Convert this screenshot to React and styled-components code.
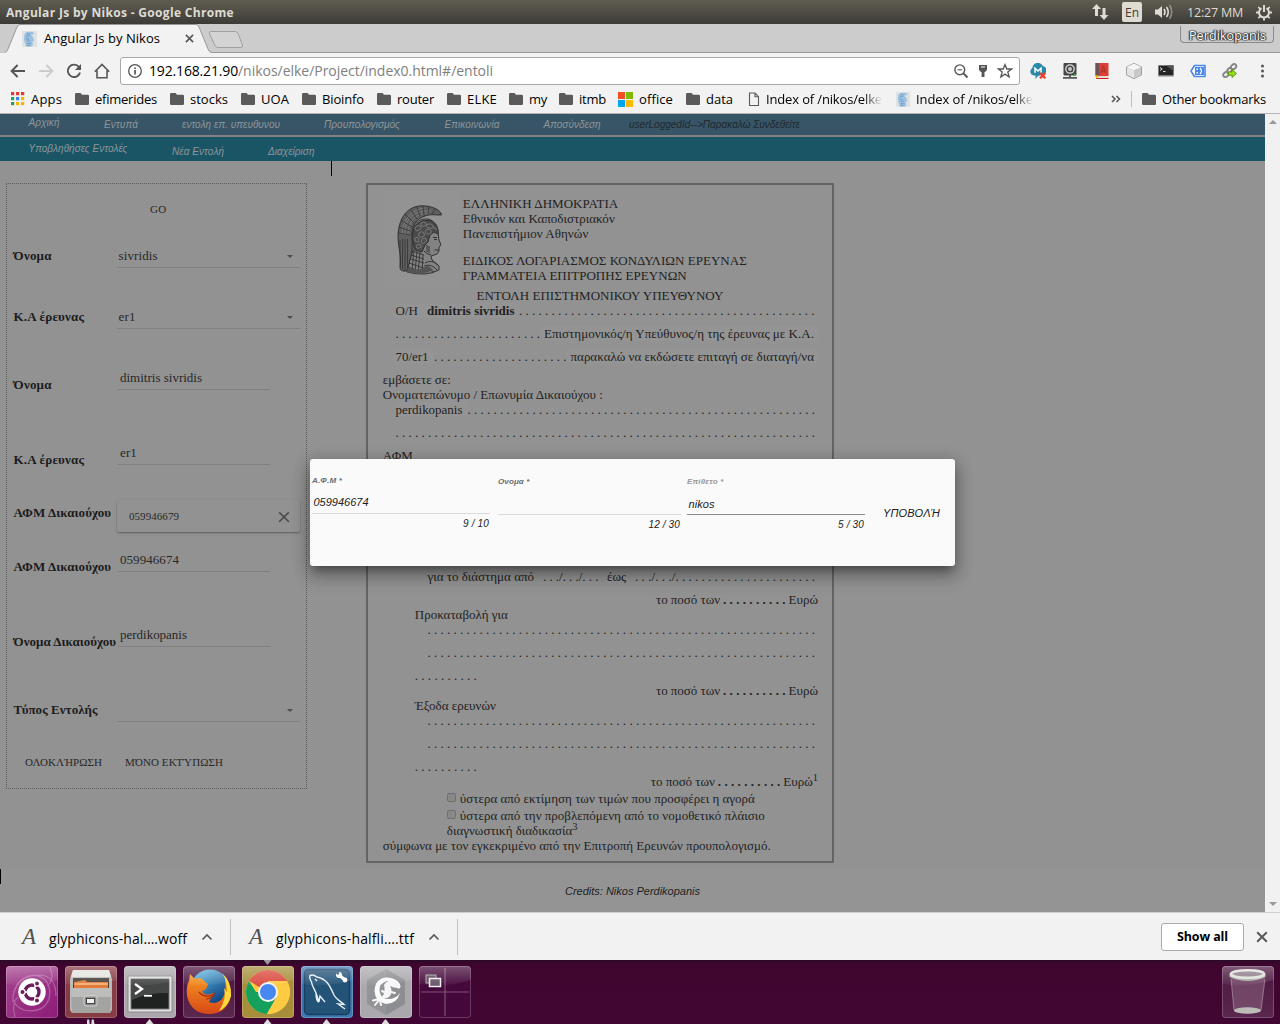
import React, { useLayoutEffect, useRef } from 'react';
import styled, { createGlobalStyle, css } from 'styled-components';

const UI = '"Open Sans", "Noto Sans", sans-serif';
const SERIF = '"Liberation Serif", serif';
const SANS = '"Liberation Sans", sans-serif';

const Global = createGlobalStyle`
  *, *::before, *::after { box-sizing: border-box; }
  html, body { margin: 0; padding: 0; background: #929292; }
  svg { display: block; flex: none; }
`;

/* ---------- text that is tracked to an exact measure ---------- */
const FitBox = styled.span`
  display: block;
  flex: none;
  width: ${(p) => p.$w}px;
  white-space: pre;
  ${(p) => p.$fade && css`
    overflow: hidden;
    mask-image: linear-gradient(90deg, #000 84%, transparent);
  `}
`;
function Fit({ w, fade, children, className }) {
  const ref = useRef(null);
  useLayoutEffect(() => {
    const el = ref.current;
    el.style.letterSpacing = '0px';
    const natural = el.getBoundingClientRect().width;
    const n = Math.max(1, el.textContent.length);
    el.style.letterSpacing = `${(w - natural) / n}px`;
  }, [w, children]);
  return (
    <FitBox $w={w} $fade={fade} className={className}><span ref={ref}>{children}</span></FitBox>
  );
}

/* ---------- desktop ---------- */
const Desktop = styled.div`
  width: 1280px;
  height: 1024px;
  overflow: hidden;
  display: flex;
  flex-direction: column;
  font-family: ${UI};
  color: #000;
`;
const Panel = styled.header`
  height: 24px;
  flex: none;
  display: flex;
  align-items: center;
  padding: 0 8px 0 6px;
  background: linear-gradient(#5f5d52, #55534a 30%, #3c3b37);
  color: #dfdbd2;
  font-size: 12.5px;
  line-height: 24px;
`;
const PanelTitle = styled(Fit)`
  margin-top: 1px;
  font-weight: 700;
  font-size: 12px;
`;
const Indicators = styled.div`
  margin-left: auto;
  display: flex;
  align-items: center;
`;
const Lang = styled.div`
  width: 20px;
  height: 20px;
  margin: 0 12px 0 13px;
  border-radius: 2px;
  background: #dfdbd2;
  color: #3c3b37;
  font-size: 12px;
  line-height: 21px;
  padding-left: 3px;
`;
const Clock = styled(Fit)`
  margin: 1px 13px 0 13px;
  font-size: 12.5px;
`;

/* ---------- browser chrome ---------- */
const TabStrip = styled.div`
  height: 29px;
  flex: none;
  display: flex;
  background: #ccc;
  border-bottom: 1px solid #999;
`;
const Tab = styled.div`
  position: relative;
  width: 213px;
  height: 29px;
  display: flex;
  align-items: center;
  padding: 0 0 0 22px;
  font-size: 13px;
  > svg:first-child { position: absolute; left: 0; top: 0; }
  > * { position: relative; }
`;
const TabTitle = styled(Fit)`margin: -1px 25px 0 7px;`;
const NewTab = styled.div`margin: 7px 0 0 -5px;`;
const UserTag = styled.div`
  margin: 2px 6px 0 auto;
  width: 94px;
  height: 17px;
  border: 1px solid #8a8a8a;
  border-top: 0;
  border-radius: 0 0 4px 4px;
  padding-left: 8px;
  color: #fff;
  font-size: 12.5px;
  line-height: 19px;
  text-shadow: 0 0 1px #222, 0 0 1px #222, 0 0 2px #333, 1px 0 1px #333, -1px 0 1px #333;
`;
const Toolbar = styled.div`
  height: 33px;
  flex: none;
  display: flex;
  align-items: center;
  padding: 3px 0 0 10px;
  background: #f2f2f2;
`;
const NavButtons = styled.div`
  display: flex;
  gap: 12px;
  width: 110px;
`;
const Omnibox = styled.div`
  width: 900px;
  height: 28px;
  display: flex;
  align-items: center;
  border: 1px solid #a8a8a8;
  border-radius: 3px;
  background: #fff;
  padding: 0 6px;
  font-size: 14px;
`;
const Host = styled(Fit)`margin: -2px 0 0 6px;`;
const Path = styled(Fit)`
  margin-top: -2px;
  color: #808080;
`;
const OmniTools = styled.div`
  margin-left: auto;
  display: flex;
  align-items: center;
  gap: 6px;
`;
const Extensions = styled.div`
  display: flex;
  gap: 16px;
  margin-left: 10px;
`;
const Bookmarks = styled.div`
  height: 28px;
  flex: none;
  display: flex;
  align-items: center;
  padding: 0 14px 1px 11px;
  background: #f2f2f2;
  border-bottom: 1px solid #b6b4b6;
  font-size: 13px;
  line-height: 24px;
`;
const Bookmark = styled.div`
  display: flex;
  align-items: center;
  gap: ${(p) => p.$gap ?? 6}px;
  margin-right: ${(p) => p.$mr ?? 13}px;
`;
const More = styled.div`
  display: flex;
  align-items: center;
  margin-left: auto;
  gap: 10px;
`;
const Rule = styled.div`
  width: 1px;
  height: ${(p) => p.$h}px;
  background: #bdbdbd;
`;

/* ---------- page ---------- */
const Viewport = styled.div`
  position: relative;
  height: 798px;
  flex: none;
  display: flex;
  background: #929292;
`;
const Page = styled.div`
  width: 1265px;
  display: flex;
  flex-direction: column;
`;
const Scrollbar = styled.div`
  width: 15px;
  background: #f1f1f1;
  display: flex;
  flex-direction: column;
  justify-content: space-between;
  align-items: center;
  padding: 6px 0 6px;
`;
const Menu = styled.nav`
  height: ${(p) => p.$h}px;
  flex: none;
  display: flex;
  background: ${(p) => p.$bg};
  border-bottom: ${(p) => p.$line || 0}px solid #828282;
  padding-left: 28.5px;
  color: #8e969a;
  font: italic 10px/12px ${SANS};
`;
const MenuItem = styled(Fit)`
  margin: ${(p) => p.$top}px ${(p) => p.$mr}px 0 0;
  color: ${(p) => p.$color || 'inherit'};
`;
const CaretRow = styled.div`
  height: 22px;
  flex: none;
  padding-left: ${(p) => p.$x}px;
`;
const TextCaret = styled.div`
  width: 1px;
  height: 15px;
  background: #000;
`;
const Main = styled.main`
  display: flex;
  align-items: flex-start;
  height: 686px;
  flex: none;
  padding-left: 6px;
`;
const Footer = styled.footer`
  flex: 1;
  display: flex;
  background: #949494;
  color: #222;
  font: italic 11px/13px ${SANS};
`;
const Credits = styled(Fit)`margin: 16px 0 0 564px;`;

/* form */
const Form = styled.form`
  width: 301px;
  height: 606px;
  border: 1px dotted #5c5c5c;
  display: flex;
  flex-direction: column;
  color: #282828;
  font: 13px/15px ${SERIF};
`;
const Row = styled.div`
  height: ${(p) => p.$h}px;
  flex: none;
  display: flex;
  padding-left: 6px;
`;
const Label = styled.label`
  width: 103px;
  flex: none;
  padding: ${(p) => p.$top}px 0 0 0.6px;
  color: #1c1c1c;
  font-weight: 700;
`;
const Select = styled.div`
  width: 183px;
  height: 20px;
  margin: 14px 0 0 0.6px;
  padding: 0 7px 0 2px;
  display: flex;
  justify-content: space-between;
  border-bottom: 1px solid #808080;
`;
const Input = styled.div`
  width: 152px;
  height: 20px;
  margin: 14px 0 0 2px;
  padding-left: 2px;
  border-bottom: 1px solid #808080;
`;
const Chip = styled.div`
  width: 183px;
  height: 32px;
  margin: 1px 0 0 1px;
  padding: 1px 10px 0 12px;
  display: flex;
  align-items: center;
  justify-content: space-between;
  border-radius: 2px;
  background: #929292;
  box-shadow: 0 1px 3px rgba(0, 0, 0, 0.22), 0 1px 1px rgba(0, 0, 0, 0.18);
  font-size: 11px;
`;
const FormButtons = styled.div`
  display: flex;
  gap: 23px;
  padding: ${(p) => p.$top}px 0 0 ${(p) => p.$x}px;
  height: ${(p) => p.$h}px;
  font-size: 11px;
`;

/* document */
const Paper = styled.article`
  width: 468px;
  height: 680px;
  margin-left: 59px;
  border: 2px solid #646464;
  padding: 6px 14px 0 14.8px;
  color: #222;
  font: 13px/15px ${SERIF};
`;
const Head = styled.div`
  display: flex;
  height: 97px;
`;
const Crest = styled.div`
  width: 76px;
  height: 98px;
  background: #939393;
  padding: 14px 0 0 13px;
`;
const HeadText = styled.div`padding: 5px 0 0 4px;`;
const HeadGroup = styled.div`margin-bottom: 12px;`;
const Line = styled.div`
  height: ${(p) => p.$h || 15}px;
  padding-left: ${(p) => p.$x || 0}px;
  display: flex;
  align-items: flex-start;
`;
const Patch = styled.span`
  display: flex;
  flex: none;
  height: 15px;
  background: #949494;
  padding: 0 ${(p) => p.$pr || 0}px 0 ${(p) => p.$pl || 0}px;
  gap: ${(p) => p.$gap || 0}px;
`;
const Amount = styled.div`
  height: 15px;
  display: flex;
  justify-content: flex-end;
  gap: 3px;
`;
const BoldDots = styled(Fit)`font-weight: 700;`;
const Euro = styled.span`display: flex;`;
const Sup = styled.span`
  height: 9px;
  margin-top: -1px;
  font-size: 10.5px;
  line-height: 9px;
`;
const Check = styled.span`
  width: 9px;
  height: 9px;
  margin: 2px 4px 0 0;
  border: 1px solid #6f6f6f;
  border-radius: 2px;
  background: #888;
`;

/* dialog */
const Dialog = styled.div`
  position: absolute;
  left: 310px;
  top: 345px;
  width: 645px;
  height: 107px;
  display: flex;
  align-items: flex-start;
  padding-left: 2px;
  border-radius: 3px;
  background: #fafafa;
  color: #212121;
  font: italic 11px/13px ${SANS};
  box-shadow: 0 7px 8px -4px rgba(0, 0, 0, 0.3), 0 10px 18px 2px rgba(0, 0, 0, 0.2), 0 4px 16px 3px rgba(0, 0, 0, 0.16);
`;
const DialogField = styled.div`
  width: ${(p) => p.$w}px;
  margin: ${(p) => p.$top}px ${(p) => p.$mr}px 0 0;
`;
const DialogLabel = styled.div`
  color: ${(p) => (p.$light ? '#999' : '#6c6c6c')};
  font-weight: 700;
  font-size: 8px;
  line-height: 10px;
  height: 19px;
`;
const DialogInput = styled.div`
  height: 19px;
  padding: ${(p) => p.$pt}px 0 0 1.5px;
  border-bottom: 1px solid ${(p) => (p.$active ? '#8c8c8c' : '#dadada')};
`;
const Counter = styled.div`
  display: flex;
  justify-content: flex-end;
  padding: 4px 1px 0 0;
  font-size: 10px;
  line-height: 12px;
`;
const Submit = styled(Fit)`margin: 48px 0 0 18px;`;

/* downloads + launcher */
const Shelf = styled.div`
  height: 48px;
  flex: none;
  display: flex;
  align-items: center;
  padding: 1px 12px 0 0;
  border-top: 1px solid #cfcfcf;
  background: #f2f2f2;
  font-size: 14px;
`;
const Download = styled.div`
  width: ${(p) => p.$w}px;
  height: 36px;
  display: flex;
  align-items: center;
  border-right: 1px solid #c0c0c0;
  padding-left: ${(p) => p.$pl}px;
`;
const FontGlyph = styled.span`
  width: 27px;
  margin: -1px 0 0 1px;
  font: italic 23px/24px ${SERIF};
  color: #505050;
`;
const FileName = styled(Fit)`margin: 2px 14px 0 0;`;
const ShowAll = styled.button`
  width: 83px;
  height: 28px;
  margin: 0 12px 0 auto;
  padding: 0 0 0 15px;
  border: 1px solid #aaa;
  border-radius: 3px;
  background: #fff;
  color: #000;
  font: 700 12.5px/24px ${UI};
  text-align: left;
`;
const Launcher = styled.div`
  height: 64px;
  flex: none;
  display: flex;
  gap: 7px;
  padding: 6px 6px 0;
  background: linear-gradient(#2b0a26, #40052f 5px, #420634);
`;
const Tile = styled.div`
  position: relative;
  width: 52px;
  height: 52px;
  flex: none;
  border-radius: 4px;
  background: ${(p) => p.$bg};
  box-shadow: inset 0 0 0 1px rgba(255, 255, 255, 0.2);
  margin-left: ${(p) => (p.$end ? 'auto' : 0)};
`;
const Pip = styled.div`
  position: absolute;
  left: 21.5px;
  ${(p) => (p.$top ? 'top: -6px;' : 'top: 53px;')}
  width: 8px;
  height: 5px;
  background: ${(p) => (p.$top ? '#999' : '#ddd')};
  clip-path: ${(p) => p.$top
    ? 'polygon(0 0, 100% 0, 50% 100%)'
    : p.$double
      ? 'polygon(0 100%, 10% 10%, 35% 10%, 40% 100%, 60% 100%, 65% 10%, 90% 10%, 100% 100%)'
      : 'polygon(50% 0, 100% 100%, 0 100%)'};
`;

/* ---------- icons ---------- */
const Folder = () => (
  <svg width="14" height="12" viewBox="0 0 14 12"><path fill="#5a5a5a" d="M0 1.2Q0 0 1.2 0H5.6L7 1.7H12.8Q14 1.7 14 3V10.8Q14 12 12.8 12H1.2Q0 12 0 10.8Z" /></svg>
);
const Favicon = ({ s = 15 }) => (
  <svg width={s} height={s + 1} viewBox="0 0 15 16">
    <rect width="15" height="16" fill="#dfe1e3" />
    <path d="M3 2Q6 0 11 1L12 3L9 4L11 6L12 10L10 11L11 13L10 15.500H4L3 12Q1 8 3 2Z" fill="#9cc0e0" />
    <path d="M5 2.500L8 3.500M4 5H7.500M4 7.500L7 8.500M5 10H8M5 12.500H9M5 14.500H8" stroke="#6a9ecb" strokeWidth="1" />
  </svg>
);
const AppsGrid = () => (
  <svg width="14" height="14" viewBox="0 0 14 14">
    {['#e33b2e', '#e33b2e', '#e33b2e', '#2aa24f', '#3b84ee', '#f7b500', '#2aa24f', '#f7b500', '#f7b500'].map((c, i) => (
      <rect key={i} x={(i % 3) * 5} y={Math.floor(i / 3) * 5} width="3.2" height="3.2" fill={c} />
    ))}
  </svg>
);
const Windows = () => (
  <svg width="15" height="15" viewBox="0 0 15 15">
    <path fill="#f25022" d="M0 0h7v7H0z" /><path fill="#7fba00" d="M8 0h7v7H8z" />
    <path fill="#00a4ef" d="M0 8h7v7H0z" /><path fill="#ffb900" d="M8 8h7v7H8z" />
  </svg>
);
const PageIcon = () => (
  <svg width="12" height="15" viewBox="0 0 12 15" fill="none" stroke="#5a5a5a" strokeWidth="1.1"><path d="M1.5 1H7L10.5 4.6V13.5H1.5ZM7 1V4.8H10.5" /></svg>
);
const Cross = ({ s, c, w = 1.6 }) => (
  <svg width={s} height={s} viewBox="0 0 10 10"><path d="M1 1L9 9M9 1L1 9" stroke={c} strokeWidth={w} /></svg>
);
const Back = ({ c, flip }) => (
  <svg width="16" height="16" viewBox="0 0 16 16" fill="none" stroke={c} strokeWidth="1.9">
    <path d={flip ? 'M1 8H14M8.4 2L14.4 8L8.4 14' : 'M15 8H2M7.6 2L1.6 8L7.6 14'} />
  </svg>
);
const Reload = () => (
  <svg width="16" height="16" viewBox="0 0 16 16"><path d="M13 4.1A6.2 6.2 0 1 0 14 9.5" fill="none" stroke="#555" strokeWidth="1.9" /><path d="M15 1V7H9Z" fill="#555" /></svg>
);
const Home = () => (
  <svg width="16" height="16" viewBox="0 0 16 16" fill="none" stroke="#555" strokeWidth="1.6"><path d="M.8 8.8L8 1.400L15.200 8.800M3 7.500V14.800H13V7.500" /></svg>
);
const Info = () => (
  <svg width="16" height="16" viewBox="0 0 16 16"><circle cx="8" cy="8" r="6.3" fill="none" stroke="#555" strokeWidth="1.3" /><path d="M7.2 7h1.7v4.6H7.2zM7.2 4.4h1.7V6H7.2z" fill="#555" /></svg>
);
const ZoomOut = () => (
  <svg width="16" height="16" viewBox="0 0 16 16" fill="none" stroke="#555" strokeWidth="1.4"><circle cx="6.8" cy="6.8" r="4.9" /><path d="M10.4 10.4L14.5 14.5" strokeWidth="2" /><path d="M4.5 6.8H9.1" strokeWidth="1.1" /></svg>
);
const KeyIcon = () => (
  <svg width="16" height="16" viewBox="0 0 16 16"><path fillRule="evenodd" fill="#555" d="M4 2H12V7L10 9H9.5V14H6.6V9H6L4 7ZM6 3.4V4.6H10V3.4Z" /></svg>
);
const Star = () => (
  <svg width="16" height="16" viewBox="0 0 16 16" fill="none" stroke="#555" strokeWidth="1.3"><path d="M8 1.6L9.8 6H14.6L10.8 9L12.2 14L8 11.1L3.8 14L5.2 9L1.4 6H6.2Z" /></svg>
);
const Dots3 = () => (
  <svg width="16" height="16" viewBox="0 0 16 16" fill="#555"><circle cx="8.5" cy="3" r="1.5" /><circle cx="8.5" cy="8" r="1.5" /><circle cx="8.5" cy="13" r="1.5" /></svg>
);
const Ext = ({ kind }) => (
  <svg width="16" height="16" viewBox="0 0 16 16">
    {kind === 'mega' && (<>
      <path d="M4 12.500A4 4 0 0 1 2.400 5A5.500 5.500 0 0 1 12.800 3A4.400 4.400 0 0 1 14.500 11L8 13L5.500 16V12.500Z" fill="#2889a8" />
      <path d="M5 9.800V5.200L8 8L11 5.200V9.800" fill="none" stroke="#fff" strokeWidth="1.500" />
      <path d="M10 10L15.300 15.300M15.300 10L10 15.300" stroke="#f04030" strokeWidth="2.300" />
    </>)}
    {kind === 'cam' && (<>
      <rect x="1.5" y="0" width="13" height="12.5" rx="1" fill="#474747" /><path d="M1 14.8H15M8 12V15" stroke="#555" strokeWidth="1.8" />
      <circle cx="8" cy="6" r="4.2" fill="none" stroke="#ddd" strokeWidth="1.3" /><circle cx="8" cy="6" r="1.9" fill="#ccc" /><rect x="12" y="11" width="2" height="2" fill="#3a3" />
    </>)}
    {kind === 'book' && (<>
      <path d="M1.5 0H14.5V13H1.5Z" fill="#dd3f35" /><path d="M1.500 0H5V13H1.500Z" fill="#6b5358" />
      <path d="M1.5 13H14.5V16H2.5Z" fill="#e9ddd8" /><path d="M2 15.5H14.5" stroke="#c22" />
      <path d="M6.5 10L9.3 3.5L12 10M7.4 8H11.2" stroke="#a83a30" strokeWidth="1.3" fill="none" /><path d="M1 12L3 16L4.500 12.500Z" fill="#f5b400" />
    </>)}
    {kind === 'cube' && (<>
      <path d="M8 .4L15.5 4V12L8 15.7L.5 12V4Z" fill="#e4e4e4" stroke="#999" strokeWidth=".9" /><path d="M8 7L15 4V12L8 15.2Z" fill="#c9c9c9" /><path d="M8 .8L15 4L8 7L1 4Z" fill="#f6f6f6" />
    </>)}
    {kind === 'term' && (<>
      <rect x="0" y="2" width="16" height="12" fill="#bbb" /><rect x=".6" y="2.6" width="14.8" height="9.8" fill="#252525" /><path d="M8 2.6H15.4V8Z" fill="#555" /><path d="M2 4.5L4.2 6L2 7.5M5 8.5H7.5" stroke="#eee" fill="none" strokeWidth=".9" />
    </>)}
    {kind === 'tag' && (<>
      <path d="M4.500 2.500H15V13.500H4.500L1 8Z" fill="#fff" stroke="#4a86e8" strokeWidth="1.600" strokeLinejoin="round" /><rect x="5" y="4" width="9" height="8" fill="#4a86e8" /><path d="M6.500 5.500H8V7H6.500zM6.500 9H8V10.500H6.500z" fill="#fff" /><path d="M10 5Q13 8 10 11" stroke="#fff" strokeWidth="1.200" fill="none" />
    </>)}
    {kind === 'link' && (<>
      <g fill="none" stroke="#858585" strokeWidth="1.900"><ellipse cx="4" cy="11.500" rx="3" ry="2.200" transform="rotate(-40 4 11.5)" /><ellipse cx="7.500" cy="7.500" rx="3" ry="2" transform="rotate(-55 7.5 7.5)" /><ellipse cx="11.500" cy="3.800" rx="3" ry="2.200" transform="rotate(-40 11.5 3.8)" /></g>
      <path d="M6.500 8.800H10V6.500L14.500 10.500L10 14.600V12.200H6.500Z" fill="#9bdc19" stroke="#4d8a0a" strokeWidth=".8" />
    </>)}
  </svg>
);
const Triangle = ({ up, w = 8, c }) => (
  <svg width={w} height={w / 2} viewBox="0 0 8 4"><path d={up ? 'M0 4L4 0L8 4Z' : 'M0 0H8L4 4Z'} fill={c} /></svg>
);
const SelectArrow = styled.div`padding-top: 7px;`;
const Chevron = () => (
  <svg width="12" height="8" viewBox="0 0 12 8"><path d="M1.5 6.5L6 2L10.5 6.5" fill="none" stroke="#5a5a5a" strokeWidth="1.7" /></svg>
);

const Athena = () => (
  <svg width="50" height="72" viewBox="0 0 50 72" fill="none" stroke="#333" strokeWidth="1">
    <path d="M4 64C6 50 2 44 2 30C3 12 12 1 26 .8C36 .8 45 5 45.500 10C38 10 34 9 29 11C20 14 15 21 16 32C17 44 15 55 11 66Q6 67 4 64Z" fill="#5f5f5f" />
    <path d="M12 30C12 16 20 8 33 8M9 30C8 14 18 5 35 6M6 30C6 15 16 4 29 3" stroke="#929292" strokeWidth=".55" />
    <path d="M3 22L14 26M5 15L16 22M9 9L18 18M15 5L21 14M21 2L24 11M27 1L28 10M33 2L32 9M39 4L36 9M2 28L14 30M4 35V62M6.500 34V64M9 34V65M11.500 34V64" strokeWidth=".8" />
    <path d="M17 34C14 20 23 13 32 14C39 16 42 21 42 27L43 35L45 40L43 42V46L41 49L35 51L36 55L43 61V65Q30 72 11 67L14 55L17 45Z" fill="#828282" />
    <path d="M16 33Q17 15 32 15Q40 17 42 25L42 29L38 27L34 30L32 37L29 40L26 47L19 45Z" fill="#4b4b4b" />
    <g stroke="#8d8d8d" strokeWidth=".7">
      <path d="M19 23q2-4 5-2t-1 4t-4-2M25 18q3-2 5 0t-2 3t-3-3M32 19q4-1 5 2t-4 2t-1-4M23 28q3-3 5 0t-2 4t-3-4M30 25q4-2 5 1t-3 3t-2-4M19 33q3-2 4 1t-2 3t-2-4M26 34q2-2 4 0t-2 4t-2-4M21 40q2-2 4 0t-2 3t-2-3M37 23q3-1 4 2" />
    </g>
    <path d="M37 32.500H41M38 34.500H41M38.500 45H43M35 50Q30 49 28 46M31 40V47M33 41V48" />
    <path d="M16 46L28 50M15 50L28 54M15 54L28 58M18 45L16 66M21 46L19 67M24 47L22 68M27 50L26 68M29 58Q36 54 42 60M28 61Q35 58 41 65M31 64L38 67M13 58L30 64M12 62L28 68" strokeWidth=".9" />
    <path d="M12 62Q22 68 32 60L37 65Q26 71 11 67Z" fill="#555" stroke="none" />
  </svg>
);

const Shine = () => <path d="M0 4Q0 0 4 0H48Q52 0 52 4V14Q26 22 0 18Z" fill="url(#shine)" />;
const LaunchIcon = ({ kind }) => (
  <svg width="52" height="52" viewBox="0 0 52 52">
    <defs><linearGradient id="shine" x1="0" y1="0" x2="0" y2="1"><stop stopColor="#fff" stopOpacity=".3" /><stop offset="1" stopColor="#fff" stopOpacity=".04" /></linearGradient></defs>
    {kind === 'ubuntu' && (<>
      <path d="M7 36C6 14 24 4 37 12Q46 19 43 33Q37 48 18 44Q1 37 10 22Q16 9 34 9Q50 10 50 30M44 1Q49 14 41 20M9 51Q5 37 12 31" fill="none" stroke="#ddb0d3" strokeWidth="1.200" opacity=".4" />
      <circle cx="26" cy="26" r="13.700" fill="#fff" />
      <circle cx="26" cy="26" r="7" fill="none" stroke="#6d1a5c" strokeWidth="3.400" />
      <path d="M26 26L12 26M26 26L33 14M26 26L33 38" stroke="#fff" strokeWidth="1.500" />
      <g fill="#6d1a5c" stroke="#fff" strokeWidth="1.200"><circle cx="16.500" cy="26" r="2.600" /><circle cx="31" cy="17.500" r="2.600" /><circle cx="31" cy="34.500" r="2.600" /></g>
    </>)}
    {kind === 'files' && (<>
      <path d="M8 4H44L47 13V44L45 47H7L5 44V13Z" fill="#b8b8b6" /><path d="M8 4H44L46 11H6Z" fill="#e3e3df" />
      <path d="M8 12H44V23H8Z" fill="#463e38" /><path d="M9 16L20 14L22 16H43V23H9Z" fill="#e47a38" /><path d="M10 18H43" stroke="#ffe1b8" />
      <path d="M6 22H46L45 47H7Z" fill="#a3a3a2" /><path d="M6 22H46V31H6Z" fill="#bdbdbb" />
      <rect x="19" y="30" width="13" height="10" rx="2" fill="#8b8b8b" stroke="#d6d6d6" /><rect x="21.500" y="32.500" width="8" height="5" fill="#f1f1f1" stroke="#464646" />
    </>)}
    {kind === 'terminal' && (<>
      <rect x="4" y="10" width="44" height="36" rx="1" fill="#e1e1e1" stroke="#8a8a8a" /><rect x="7" y="13" width="38" height="30" fill="#202222" stroke="#777" />
      <path d="M8 14H44V27Q25 26 8 34Z" fill="#454747" /><path d="M11 18L18 23L11 28" fill="none" stroke="#fff" strokeWidth="2.300" /><path d="M20 29.800H28" stroke="#fff" strokeWidth="1.800" />
    </>)}
    {kind === 'firefox' && (<>
      <defs><linearGradient id="fox" x1="0" y1="0" x2="0" y2="1"><stop stopColor="#f89a22" /><stop offset="1" stopColor="#d84817" /></linearGradient><linearGradient id="globe" x1="0" y1="0" x2=".6" y2="1"><stop stopColor="#6cc5ec" /><stop offset="1" stopColor="#073a78" /></linearGradient></defs>
      <circle cx="27" cy="23" r="19.500" fill="url(#globe)" />
      <path d="M7 8L12 13Q18 10 22 16L25 18L24 21Q23 24 19 25Q22 31 30 27L31 29Q27 32 26 36Q33 39 39 33Q44 26 42 14Q48 20 48 29Q45 47 27 48Q8 48 4 30Q3 20 6 15Z" fill="url(#fox)" />
      <path d="M39 7Q49 16 48 30Q45 41 36 45Q44 33 41 22Q43 25 44 26Q44 14 39 7Z" fill="#ffd83b" />
      <path d="M16 26Q22 33 31 28Q30 32 23 33" fill="none" stroke="#a82e0c" strokeWidth="1.200" />
    </>)}
    {kind === 'chrome' && (<>
      <circle cx="26" cy="26" r="22" fill="#ffcb43" /><path d="M26 26L7 15A22 22 0 0 1 45 15H26Z" fill="#db493d" /><path d="M7 15A22 22 0 0 0 25 48L35 31L26 26H14Z" fill="#14a05d" /><path d="M45.500 16A22 22 0 0 1 25 48L36 28L33 16Z" fill="#ffcb43" />
      <circle cx="26" cy="26" r="10" fill="#f5f5f5" /><circle cx="26" cy="26" r="8" fill="#4787f0" />
    </>)}
    {kind === 'mysql' && (<>
      <rect x="3.500" y="3.500" width="45" height="45" rx="4" fill="#245378" stroke="#183f61" strokeWidth="1.500" />
      <path d="M18 36C16 36 15 31 15 27C13 22 11 20 10.500 16Q8 12 9 9.500Q12 8 16 11C26 13 29 20 33 29C35 33 39 35 43 38.500L37 38L44 43M15 27L18 36L19 30L24 36M14 13L16 15" fill="none" stroke="#e7f1f9" strokeWidth="1.400" />
      <path d="M38 9L44 14" stroke="#fff" strokeWidth="3" /><circle cx="38" cy="9" r="3" fill="#fff" /><circle cx="44" cy="14" r="2.400" fill="#fff" /><circle cx="36.800" cy="7.300" r="1.400" fill="#245378" />
    </>)}
    {kind === 'gecko' && (<>
      <path d="M26 3L45 14V38L26 49L7 38V14Z" fill="#8f9193" opacity=".85" /><path d="M26 3L45 14V38L26 49Z" fill="#828486" opacity=".35" />
      <path d="M40 27Q37 38 26 38Q15 36 14.500 25Q15 12 27 11.500Q36 12 39.500 17.500Q42 22 38 23Q36 16 27 15Q19 17 19.500 25Q21 33 28 33Q36 33 40 27Z" fill="#fafafa" />
      <path d="M24 19Q28 13 34 15Q39 17 38 22Q33 22 30 20Q33 25 30 30Q26 34 22 31Q26 26 24 19Z" fill="#f6f6f6" />
      <path d="M19 33L13 34.500M19 34L15 39M20 34L21 39M22 25L26 27M31 26L35 27" stroke="#f6f6f6" strokeWidth="2" fill="none" strokeLinecap="round" />
    </>)}
    {kind === 'workspace' && (<>
      <path d="M26 2V50M2 26H50" stroke="#805475" strokeWidth="1.200" /><rect x="7" y="9" width="10" height="8" fill="#5c4058" stroke="#aaa" /><rect x="10.500" y="12.500" width="11" height="8" fill="#655365" stroke="#eee" strokeWidth="1.500" />
    </>)}
    {kind === 'trash' && (<>
      <path d="M9 11L12 44Q26 51 39 44L43 11Z" fill="#9a7a90" opacity=".42" /><path d="M9 13L12 44M43 13L39 44" stroke="#d5c8d1" strokeWidth=".8" opacity=".6" />
      <ellipse cx="25.500" cy="44.500" rx="13.500" ry="3.300" fill="#bcbdb9" /><path d="M7.500 8V11Q26 19 43.500 11V8Z" fill="#a9aba4" /><ellipse cx="25.500" cy="8" rx="16.500" ry="3.800" fill="#8d7c88" stroke="#e0e0db" strokeWidth="2.600" />
    </>)}
    <Shine />
  </svg>
);

/* ---------- data ---------- */
const bookmarks = [
  ['apps', 'Apps', 31], ['f', 'efimerides', 62], ['f', 'stocks', 38], ['f', 'UOA', 28], ['f', 'Bioinfo', 42],
  ['f', 'router', 37], ['f', 'ELKE', 30, 12], ['f', 'my', 18, 12], ['f', 'itmb', 27, 12], ['w', 'office', 34], ['f', 'data', 27, 15],
];
const dots = (n) => Array(n).fill('.').join(' ');
const Leader = ({ n, w }) => <Fit w={w}>{dots(n)}</Fit>;
const tiles = [
  ['ubuntu', 'linear-gradient(135deg,#a5458f,#8d1b78)'],
  ['files', '#873b43', 'double'], ['terminal', '#aaa6ab', 'one'], ['firefox', 'linear-gradient(#4b1640,#5b274e)'],
  ['chrome', '#a68e3a', 'both'], ['mysql', '#3d79b1', 'one'], ['gecko', '#aaa8ad', 'one'], ['workspace', '#45083a'],
];
const AmountLine = ({ sup }) => (
  <Amount>
    <Fit w={64}>το ποσό των</Fit>
    <BoldDots w={62.5}>{dots(10)}</BoldDots>
    {sup ? <Euro>Ευρώ<Sup>1</Sup></Euro> : <Fit w={29.5}>Ευρώ</Fit>}
  </Amount>
);

export default function App() {
  return (
    <Desktop>
      <Global />
      <Panel>
        <PanelTitle w={228}>Angular Js by Nikos - Google Chrome</PanelTitle>
        <Indicators>
          <svg width="18" height="18" viewBox="0 0 18 18" fill="#dfdbd2"><path d="M1 6L5.500 1L10 6H7V13H4V6ZM8.500 12H11.500V5H14.500V12H17.500L13 17Z" /></svg>
          <Lang><Fit w={14}>En</Fit></Lang>
          <svg width="20" height="18" viewBox="0 0 20 18" fill="none" stroke="#dfdbd2" strokeWidth="1.600"><path d="M1 6.500H4L8 3V15L4 11.500H1Z" fill="#dfdbd2" stroke="none" /><path d="M10 6Q12 9 10 12M12.500 4Q16 9 12.500 14" /><path d="M15.500 2Q20 9 15.500 16" opacity=".45" /></svg>
          <Clock w={56}>12:27 MM</Clock>
          <svg width="16" height="17" viewBox="0 0 16 17" fill="none" stroke="#dfdbd2"><path d="M5.500 4.200A5 5 0 1 0 10.500 4.200M8 1V8" strokeWidth="2" /><path d="M8 13.500V16.500M0 8.500H3M13 8.500H16M2.300 3L4.200 5M13.700 3L11.800 5M2.300 14.200L4.200 12.300M13.700 14.200L11.800 12.300" strokeWidth="1.800" /></svg>
        </Indicators>
      </Panel>

      <TabStrip>
        <Tab>
          <svg width="213" height="29" viewBox="0 0 213 29"><path d="M0 29V28.500H5Q7 28 8 25L17 3Q18 .5 20 .5H196Q198 .5 199 3L208 25Q209 28.500 212 28.500V29Z" fill="#f2f2f2" /><path d="M5 28.500Q7 28 8 25L17 3Q18 .5 20 .5H196Q198 .5 199 3L208 25Q209 28.500 212 28.500" fill="none" stroke="#999" /></svg>
          <Favicon />
          <TabTitle w={116}>Angular Js by Nikos</TabTitle>
          <Cross s={9} c="#5a5a5a" w={1.900} />
        </Tab>
        <NewTab><svg width="36" height="18" viewBox="0 0 36 18"><path d="M3 .5H27Q29 .5 30 2.500L34.500 14Q35 16.500 33 16.500H10Q8 16.500 7 14.500L1.500 3Q.5 .5 3 .5Z" fill="#d3d3d3" stroke="#a0a0a0" /></svg></NewTab>
        <UserTag><Fit w={77}>Perdikopanis</Fit></UserTag>
      </TabStrip>

      <Toolbar>
        <NavButtons><Back c="#555" /><Back c="#ccc" flip /><Reload /><Home /></NavButtons>
        <Omnibox>
          <Info />
          <Host w={89}>192.168.21.90</Host>
          <Path w={255}>/nikos/elke/Project/index0.html#/entoli</Path>
          <OmniTools><ZoomOut /><KeyIcon /><Star /></OmniTools>
        </Omnibox>
        <Extensions>
          {['mega', 'cam', 'book', 'cube', 'term', 'tag', 'link'].map((k) => <Ext key={k} kind={k} />)}
          <Dots3 />
        </Extensions>
      </Toolbar>

      <Bookmarks>
        {bookmarks.map(([k, t, w, mr]) => (
          <Bookmark key={t} $mr={mr}>
            {k === 'apps' ? <AppsGrid /> : k === 'w' ? <Windows /> : <Folder />}
            <Fit w={w}>{t}</Fit>
          </Bookmark>
        ))}
        <Bookmark $mr={14}><PageIcon /><Fit w={116} fade>Index of /nikos/elke</Fit></Bookmark>
        <Bookmark $mr={0}><Favicon s={14} /><Fit w={117} fade>Index of /nikos/elke</Fit></Bookmark>
        <More>
          <svg width="10" height="8" viewBox="0 0 10 8"><path d="M1 1L4 4L1 7M5.500 1L8.500 4L5.500 7" fill="none" stroke="#555" strokeWidth="1.500" /></svg>
          <Rule $h={16} />
          <Bookmark $mr={0}><Folder /><Fit w={104}>Other bookmarks</Fit></Bookmark>
        </More>
      </Bookmarks>

      <Viewport>
        <Page>
          <Menu $h={23} $bg="#375567" $line={2}>
            <MenuItem w={31} $top={3} $mr={44.500}>Αρχική</MenuItem>
            <MenuItem w={34} $top={5} $mr={44}>Εντυπά</MenuItem>
            <MenuItem w={98} $top={5} $mr={44}>εντολη επ. υπευθυνου</MenuItem>
            <MenuItem w={76} $top={5} $mr={44.500}>Προυπολογισμός</MenuItem>
            <MenuItem w={55} $top={5} $mr={44}>Επικοινωνία</MenuItem>
            <MenuItem w={57} $top={5} $mr={28.500}>Αποσύνδεση</MenuItem>
            <MenuItem w={171} $top={5} $mr={0} $color="#20282c">userLoggedId--&gt;Παρακαλώ Συνδεθείτε</MenuItem>
          </Menu>
          <Menu $h={24} $bg="#1a5566">
            <MenuItem w={99} $top={6} $mr={44.500}>Υποβληθήσες Εντολές</MenuItem>
            <MenuItem w={52} $top={9} $mr={44}>Νέα Εντολή</MenuItem>
            <MenuItem w={46.500} $top={9} $mr={0}>Διαχείριση</MenuItem>
          </Menu>
          <CaretRow $x={331}><TextCaret /></CaretRow>

          <Main>
            <Form>
              <FormButtons $x={143} $h={50} $top={18}><Fit w={16.500}>GO</Fit></FormButtons>
              <Row $h={61}><Label $top={14}><Fit w={38}>Όνομα</Fit></Label><Select><Fit w={39}>sivridis</Fit><SelectArrow><Triangle w={6} c="#4c4c4c" /></SelectArrow></Select></Row>
              <Row $h={61}><Label $top={14}><Fit w={70.500}>Κ.Α έρευνας</Fit></Label><Select><Fit w={17}>er1</Fit><SelectArrow><Triangle w={6} c="#4c4c4c" /></SelectArrow></Select></Row>
              <Row $h={75}><Label $top={21}><Fit w={38}>Όνομα</Fit></Label><Input><Fit w={82}>dimitris sivridis</Fit></Input></Row>
              <Row $h={68}><Label $top={21}><Fit w={70.500}>Κ.Α έρευνας</Fit></Label><Input><Fit w={17}>er1</Fit></Input></Row>
              <Row $h={39}><Label $top={6}><Fit w={97.500}>ΑΦΜ Δικαιούχου</Fit></Label><Chip><Fit w={50}>059946679</Fit><Cross s={12} c="#484848" w={1.300} /></Chip></Row>
              <Row $h={75}><Label $top={21}><Fit w={97.500}>ΑΦΜ Δικαιούχου</Fit></Label><Input><Fit w={59}>059946674</Fit></Input></Row>
              <Row $h={75}><Label $top={21}><Fit w={102.500}>Όνομα Δικαιούχου</Fit></Label><Input><Fit w={67}>perdikopanis</Fit></Input></Row>
              <Row $h={52}><Label $top={14}><Fit w={84}>Τύπος Εντολής</Fit></Label><Select><span /><SelectArrow><Triangle w={6} c="#4c4c4c" /></SelectArrow></Select></Row>
              <FormButtons $x={18} $h={40} $top={15}><Fit w={77}>ΟΛΟΚΛΉΡΩΣΗ</Fit><Fit w={98}>ΜΌΝΟ ΕΚΤΎΠΩΣΗ</Fit></FormButtons>
            </Form>

            <Paper>
              <Head>
                <Crest><Athena /></Crest>
                <HeadText>
                  <HeadGroup>
                    <Fit w={155.500}>ΕΛΛΗΝΙΚΗ ΔΗΜΟΚΡΑΤΙΑ</Fit>
                    <Fit w={152}>Εθνικόν και Καποδιστριακόν</Fit>
                    <Fit w={125.500}>Πανεπιστήμιον Αθηνών</Fit>
                  </HeadGroup>
                  <Fit w={284}>ΕΙΔΙΚΟΣ ΛΟΓΑΡΙΑΣΜΟΣ ΚΟΝΔΥΛΙΩΝ ΕΡΕΥΝΑΣ</Fit>
                  <Fit w={224}>ΓΡΑΜΜΑΤΕΙΑ ΕΠΙΤΡΟΠΗΣ ΕΡΕΥΝΩΝ</Fit>
                </HeadText>
              </Head>
              <Line $x={93.700}><Fit w={247}>ΕΝΤΟΛΗ ΕΠΙΣΤΗΜΟΝΙΚΟΥ ΥΠΕΥΘΥΝΟΥ</Fit></Line>
              <Line $x={12.700} $h={23}>
                <Patch $gap={9} $pr={4.500}><Fit w={22.500}>Ο/Η</Fit><BoldDots w={87.500}>dimitris sivridis</BoldDots></Patch><Leader n={46} w={295.500} />
              </Line>
              <Line $x={12.700} $h={23}><Leader n={23} w={144.500} /><Patch $pl={4} $pr={4}><Fit w={270}>Επιστημονικός/η Υπεύθυνος/η της έρευνας με Κ.Α.</Fit></Patch></Line>
              <Line $x={12.700} $h={23}><Patch $pr={5.500}><Fit w={33}>70/er1</Fit></Patch><Leader n={21} w={132.500} /><Patch $pl={4} $pr={4}><Fit w={243.500}>παρακαλώ να εκδώσετε επιταγή σε διαταγή/να</Fit></Patch></Line>
              <Line><Fit w={68}>εμβάσετε σε:</Fit></Line>
              <Line><Fit w={220}>Ονοματεπώνυμο / Επωνυμία Δικαιούχου :</Fit></Line>
              <Line $x={12.700} $h={23}><Patch $pr={5}><Fit w={67}>perdikopanis</Fit></Patch><Leader n={54} w={347.500} /></Line>
              <Line $x={12.700} $h={23}><Leader n={65} w={419.500} /></Line>
              <Line $h={121}><Fit w={30}>ΑΦΜ</Fit></Line>
              <Line $x={44.700} $h={23}>
                <Patch $gap={9}><Fit w={106.500}>για το διάστημα από</Fit><Fit w={55.500}>. . ./. . ./. . .</Fit></Patch>
                <Patch $gap={9} $pl={8.500}><Fit w={19}>έως</Fit><Fit w={40.500}>. . ./. . ./</Fit></Patch>
                <Leader n={22} w={139.500} />
              </Line>
              <AmountLine />
              <Line $x={32}><Fit w={93}>Προκαταβολή για</Fit></Line>
              <Line $x={44.700} $h={23}><Leader n={60} w={387.500} /></Line>
              <Line $x={44.700} $h={23}><Leader n={60} w={387.500} /></Line>
              <Line $x={32}><Leader n={10} w={62} /></Line>
              <AmountLine />
              <Line $x={32}><Fit w={81}>Έξοδα ερευνών</Fit></Line>
              <Line $x={44.700} $h={23}><Leader n={60} w={387.500} /></Line>
              <Line $x={44.700} $h={23}><Leader n={60} w={387.500} /></Line>
              <Line $x={32}><Leader n={10} w={62} /></Line>
              <AmountLine sup />
              <Line $x={64} $h={2} />
              <Line $x={64} $h={17}><Check /><Fit w={295}>ύστερα από εκτίμηση των τιμών που προσφέρει η αγορά</Fit></Line>
              <Line $x={64}><Check /><Fit w={305}>ύστερα από την προβλεπόμενη από το νομοθετικό πλάισιο</Fit></Line>
              <Line $x={64}><Fit w={125.500}>διαγνωστική διαδικασία</Fit><Sup>3</Sup></Line>
              <Line><Fit w={388}>σύμφωνα με τον εγκεκριμένο από την Επιτροπή Ερευνών προυπολογισμό.</Fit></Line>
            </Paper>
          </Main>
          <Footer><TextCaret /><Credits w={135}>Credits: Nikos Perdikopanis</Credits></Footer>
        </Page>
        <Scrollbar><Triangle up w={8} c="#999" /><Triangle w={8} c="#999" /></Scrollbar>

        <Dialog>
          <DialogField $w={178} $top={17} $mr={8}>
            <DialogLabel><Fit w={30}>Α.Φ.Μ *</Fit></DialogLabel>
            <DialogInput $pt={1}><Fit w={55}>059946674</Fit></DialogInput>
            <Counter><Fit w={26}>9 / 10</Fit></Counter>
          </DialogField>
          <DialogField $w={183} $top={18} $mr={6}>
            <DialogLabel><Fit w={31.500}>Ονομα *</Fit></DialogLabel>
            <DialogInput $pt={2} />
            <Counter><Fit w={31.500}>12 / 30</Fit></Counter>
          </DialogField>
          <DialogField $w={178} $top={18} $mr={0}>
            <DialogLabel $light><Fit w={36.500}>Επίθετο *</Fit></DialogLabel>
            <DialogInput $pt={2} $active><Fit w={26}>nikos</Fit></DialogInput>
            <Counter><Fit w={26}>5 / 30</Fit></Counter>
          </DialogField>
          <Submit w={57}>ΥΠΟΒΟΛΉ</Submit>
        </Dialog>
      </Viewport>

      <Shelf>
        <Download $w={231} $pl={21}><FontGlyph>A</FontGlyph><FileName w={138}>glyphicons-hal….woff</FileName><Chevron /></Download>
        <Download $w={227} $pl={17}><FontGlyph>A</FontGlyph><FileName w={138}>glyphicons-halfli….ttf</FileName><Chevron /></Download>
        <ShowAll><Fit w={51}>Show all</Fit></ShowAll>
        <Cross s={12} c="#5a5a5a" w={1.700} />
      </Shelf>

      <Launcher>
        {tiles.map(([k, bg, pip]) => (
          <Tile key={k} $bg={bg}>
            <LaunchIcon kind={k} />
            {pip && <Pip $double={pip === 'double'} />}
            {pip === 'both' && <Pip $top />}
          </Tile>
        ))}
        <Tile $bg="linear-gradient(#4b1640,#5b274e)" $end><LaunchIcon kind="trash" /></Tile>
      </Launcher>
    </Desktop>
  );
}
